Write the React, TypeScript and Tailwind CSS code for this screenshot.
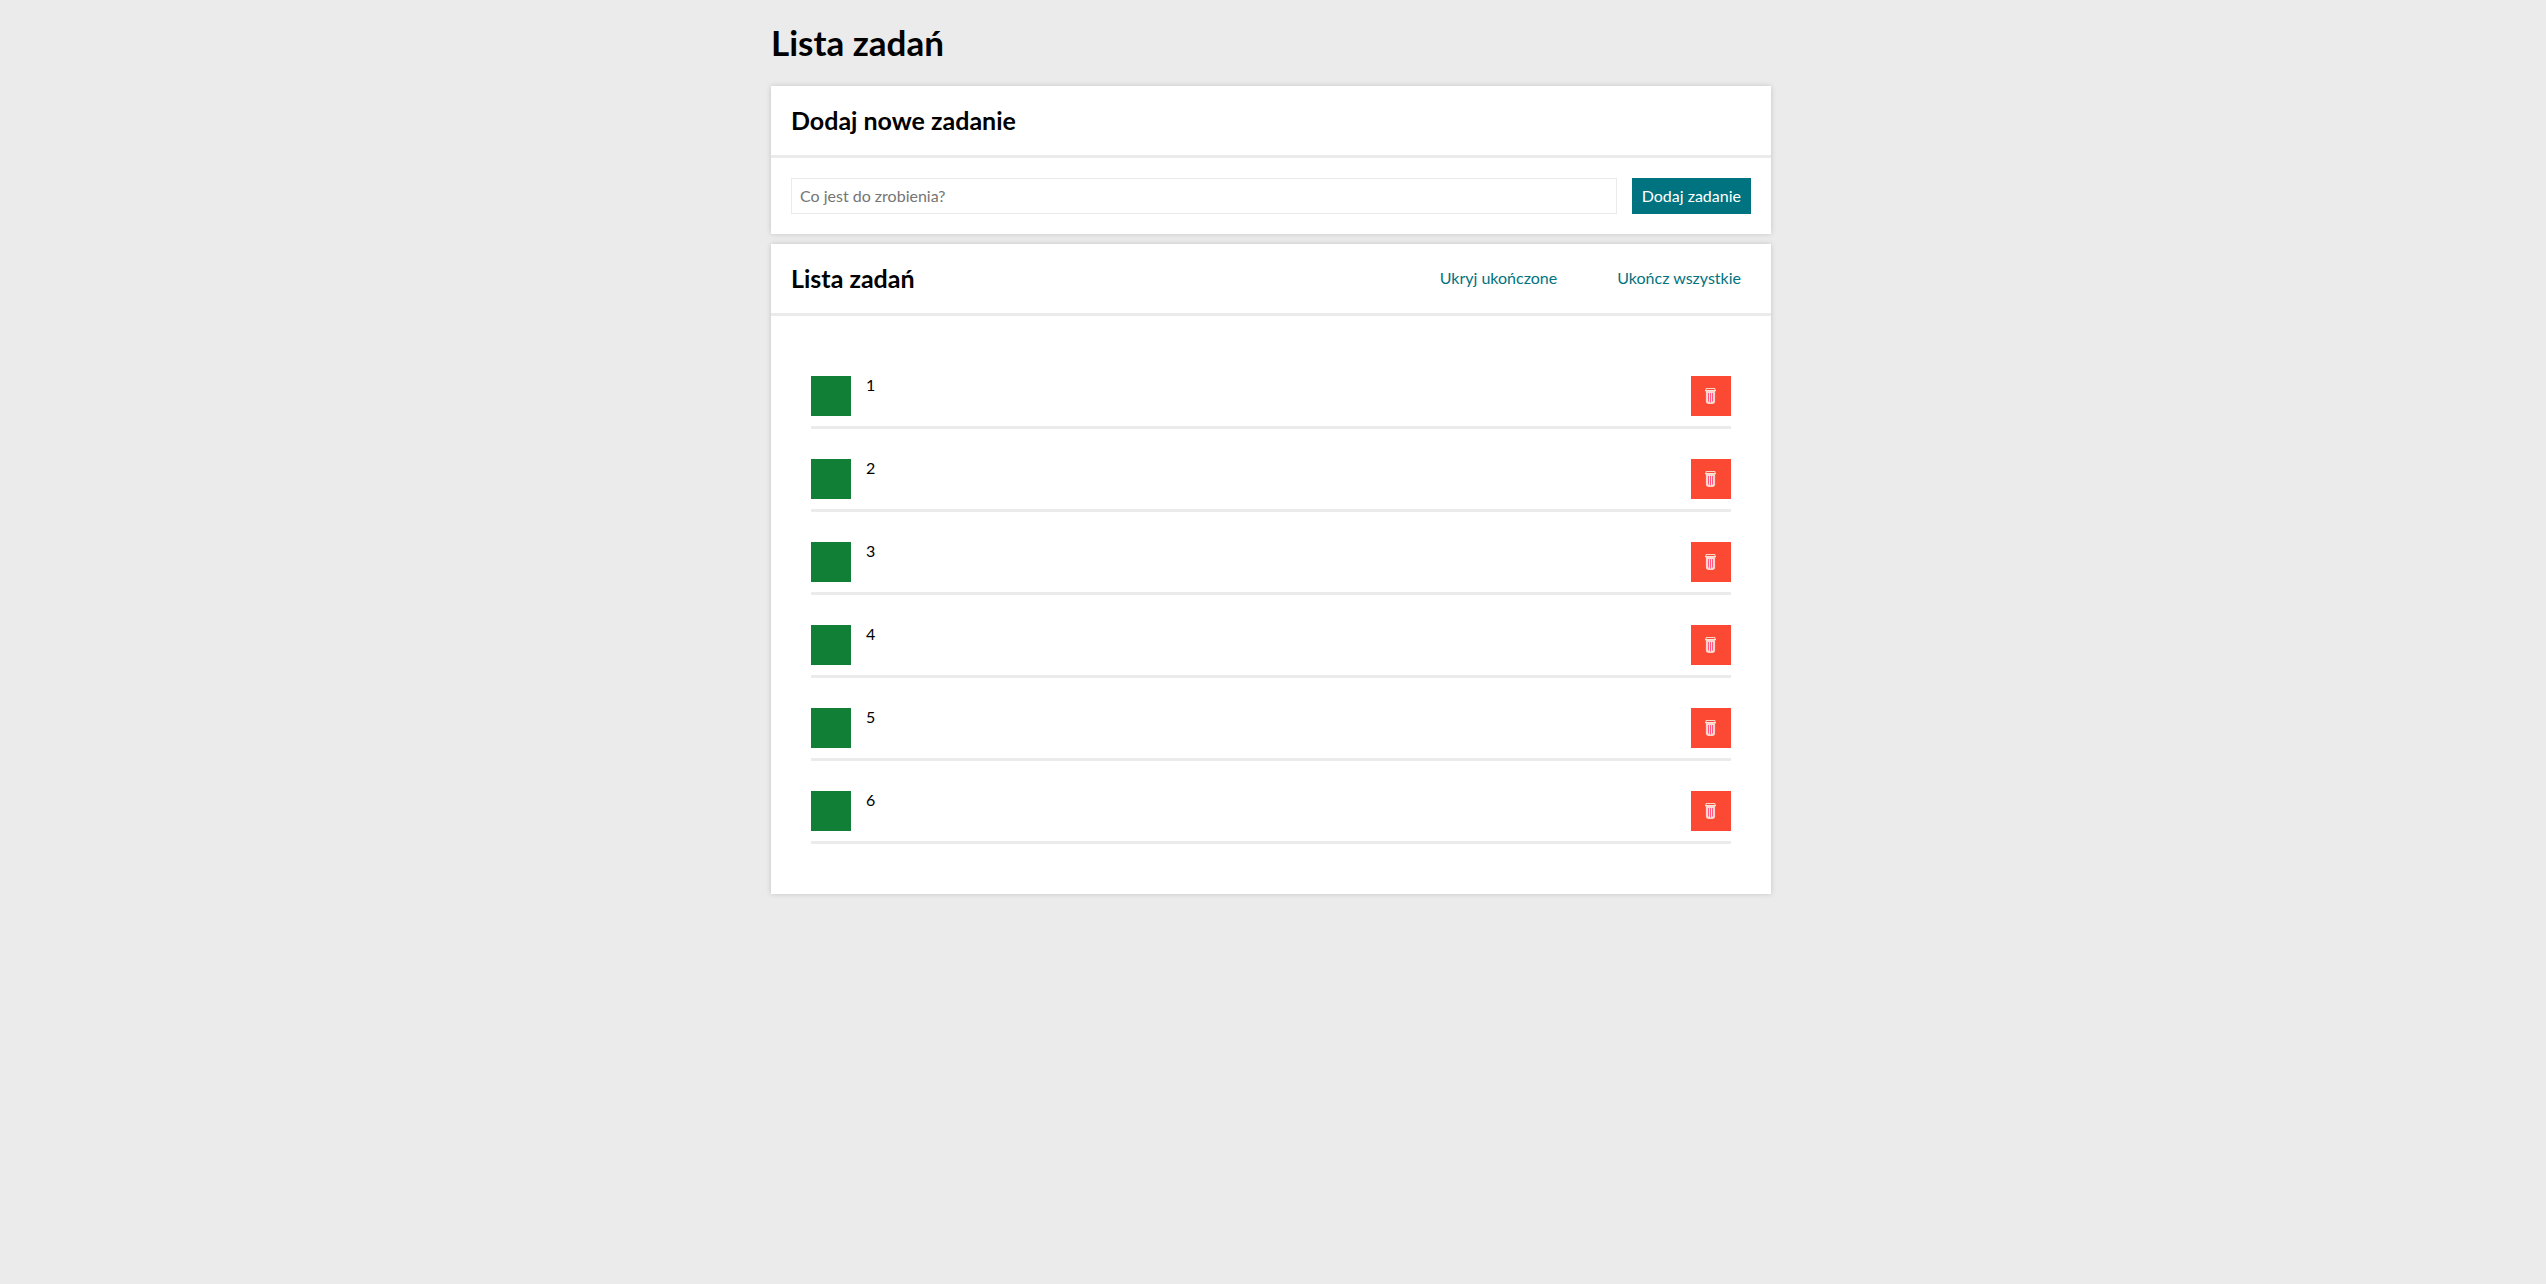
import { useState } from "react";
import type { FormEvent, ReactNode } from "react";

type Task = { id: number; content: string; done: boolean };

const initialTasks: Task[] = ["1", "2", "3", "4", "5", "6"].map((content, index) => ({
  id: index + 1,
  content,
  done: false,
}));

function TrashIcon() {
  return (
    <svg width="12" height="18" viewBox="0 0 12 18" fill="none" aria-hidden="true">
      <path d="M1.5 4.5V14.5Q1.5 16.5 5.5 16.5Q9.5 16.5 9.5 14.5V4.5" fill="#ffd9d4" stroke="#fbd6c8" strokeWidth="1.2" />
      <path d="M3.5 6V14.5M5.5 6V15.5M7.5 6V14.5" stroke="#ff5a86" strokeWidth="1" />
      <path d="M1 1.5H10V4.5H1Z" stroke="#fbd6c8" strokeWidth="1" />
      <path d="M0 3.5H11" stroke="#fde3d8" strokeWidth="1" />
    </svg>
  );
}

function Section({ title, actions, children }: { title: string; actions?: ReactNode; children: ReactNode }) {
  return (
    <section className="mb-2.5 bg-white shadow-[0_0_5px_#c4c4c4]">
      <header className="flex items-center justify-between border-b-3 border-[#ebebeb] p-5">
        <h2 className="text-[25px] leading-[29px] font-bold">{title}</h2>
        {actions}
      </header>
      {children}
    </section>
  );
}

export default function App() {
  const [tasks, setTasks] = useState<Task[]>(initialTasks);
  const [hideDone, setHideDone] = useState(false);
  const [draft, setDraft] = useState("");

  const addTask = (event: FormEvent) => {
    event.preventDefault();
    const content = draft.trim();
    if (!content) return;
    setTasks([...tasks, { id: Date.now(), content, done: false }]);
    setDraft("");
  };

  const toggle = (id: number) =>
    setTasks(tasks.map((task) => (task.id === id ? { ...task, done: !task.done } : task)));

  return (
    <div className="min-h-screen bg-[#ebebeb] pr-1 font-[Lato,sans-serif] text-[16px] leading-[18px] text-black">
      <main className="mx-auto max-w-[1000px] pt-5">
        <h1 className="mb-[22px] text-[35px] leading-[44px] font-bold">Lista zadań</h1>

        <Section title="Dodaj nowe zadanie">
          <form className="flex gap-[15px] p-5" onSubmit={addTask}>
            <input
              className="h-9 min-w-0 flex-1 border border-[#ebebeb] px-2 pb-0.5 placeholder:text-[#757575]"
              aria-label="Nowe zadanie"
              placeholder="Co jest do zrobienia?"
              value={draft}
              onChange={(event) => setDraft(event.target.value)}
            />
            <button className="h-9 bg-[#007380] px-2.5 text-white">Dodaj zadanie</button>
          </form>
        </Section>

        <Section
          title="Lista zadań"
          actions={
            <div className="flex gap-10 pb-0.5 text-[#007380]">
              <button className="px-2.5" onClick={() => setHideDone(!hideDone)}>
                {hideDone ? "Pokaż ukończone" : "Ukryj ukończone"}
              </button>
              <button className="px-2.5" onClick={() => setTasks(tasks.map((task) => ({ ...task, done: true })))}>
                Ukończ wszystkie
              </button>
            </div>
          }
        >
          <ul className="px-10 pt-[30px] pb-[50px]">
            {tasks
              .filter((task) => !(hideDone && task.done))
              .map((task) => (
                <li key={task.id} className="flex items-start gap-[15px] border-b-3 border-[#ebebeb] pt-[30px] pb-2.5">
                  <button
                    className="size-10 bg-[#117f35] text-white"
                    aria-label={`Ukończ zadanie ${task.content}`}
                    onClick={() => toggle(task.id)}
                  >
                    {task.done ? "✔" : ""}
                  </button>
                  <span className={task.done ? "flex-1 line-through" : "flex-1"}>{task.content}</span>
                  <button
                    className="flex size-10 items-center justify-center bg-[#fb4934]"
                    aria-label={`Usuń zadanie ${task.content}`}
                    onClick={() => setTasks(tasks.filter(({ id }) => id !== task.id))}
                  >
                    <TrashIcon />
                  </button>
                </li>
              ))}
          </ul>
        </Section>
      </main>
    </div>
  );
}
